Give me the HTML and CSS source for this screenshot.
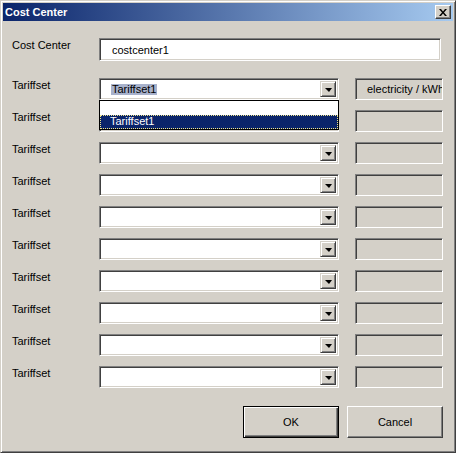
FILE: index.html
```html
<!DOCTYPE html>
<html lang="en">
<head>
    <meta charset="UTF-8">
    <title>Cost Center</title>
    <link rel="stylesheet" href="styles.css">
</head>
<body>

<div class="window">
    <div class="titlebar">
        <span class="title">Cost Center</span>
        <button class="close">
            <svg width="8" height="7" viewBox="0 0 8 7">
                <path d="M0 0h2l2 2.5L6 0h2L5 3.5 8 7H6L4 4.5 2 7H0l3-3.5z" fill="#000"/>
            </svg>
        </button>
    </div>

    <div class="content">
        <div class="form">
            <div class="label">Cost Center</div>
            <div class="field wide"><span class="text">costcenter1</span></div>

            <div class="label">Tariffset</div>
            <div class="combo">
                <div class="combo-text"><span class="selected">Tariffset1</span></div>
                <span class="arrow"></span>
                <div class="list">
                    <div class="item"></div>
                    <div class="item active">Tariffset1</div>
                </div>
            </div>
            <div class="field readonly"><span class="text">electricity / kWh</span></div>

            <div class="label">Tariffset</div>
            <div class="combo"><div class="combo-text"></div><span class="arrow"></span></div>
            <div class="field readonly"></div>

            <div class="label">Tariffset</div>
            <div class="combo"><div class="combo-text"></div><span class="arrow"></span></div>
            <div class="field readonly"></div>

            <div class="label">Tariffset</div>
            <div class="combo"><div class="combo-text"></div><span class="arrow"></span></div>
            <div class="field readonly"></div>

            <div class="label">Tariffset</div>
            <div class="combo"><div class="combo-text"></div><span class="arrow"></span></div>
            <div class="field readonly"></div>

            <div class="label">Tariffset</div>
            <div class="combo"><div class="combo-text"></div><span class="arrow"></span></div>
            <div class="field readonly"></div>

            <div class="label">Tariffset</div>
            <div class="combo"><div class="combo-text"></div><span class="arrow"></span></div>
            <div class="field readonly"></div>

            <div class="label">Tariffset</div>
            <div class="combo"><div class="combo-text"></div><span class="arrow"></span></div>
            <div class="field readonly"></div>

            <div class="label">Tariffset</div>
            <div class="combo"><div class="combo-text"></div><span class="arrow"></span></div>
            <div class="field readonly"></div>

            <div class="label">Tariffset</div>
            <div class="combo"><div class="combo-text"></div><span class="arrow"></span></div>
            <div class="field readonly"></div>
        </div>

        <div class="buttons">
            <button class="btn default">OK</button>
            <button class="btn">Cancel</button>
        </div>
    </div>
</div>

</body>
</html>
```

FILE: styles.css
```css
body {
    margin: 0;
    padding: 0;
    font-family: 'Liberation Sans', Arial, sans-serif;
    font-size: 11px;
    color: #000;
}

.window {
    width: 456px;
    height: 453px;
    box-sizing: border-box;
    background-color: #d4d0c8;
    border: 1px solid;
    border-color: #d4d0c8 #404040 #404040 #d4d0c8;
    box-shadow: inset 1px 1px #ffffff, inset -1px -1px #808080;
    padding: 2px;
    display: flex;
    flex-direction: column;
}

.titlebar {
    height: 18px;
    display: flex;
    align-items: center;
    justify-content: space-between;
    background: linear-gradient(to right, #0a246a, #a6caf0);
}

.title {
    color: #fff;
    font-weight: bold;
    padding-left: 2px;
}

.close {
    width: 16px;
    height: 14px;
    margin-right: 2px;
    padding: 0;
    border: 1px solid;
    border-color: #fff #404040 #404040 #fff;
    box-shadow: inset -1px -1px #808080;
    background-color: #d4d0c8;
    display: flex;
    align-items: center;
    justify-content: center;
}

.content {
    padding: 17px 10px 0 9px;
}

.form {
    display: grid;
    grid-template-columns: 87px 240px 104px;
    row-gap: 10px;
}

.label {
    padding-top: 1px;
    line-height: 13px;
}

.field {
    height: 22px;
    box-sizing: border-box;
    border: 1px solid;
    border-color: #808080 #fff #fff #808080;
    box-shadow: inset 1px 1px #404040, inset -1px -1px #d4d0c8;
    background-color: #fff;
    display: flex;
    align-items: center;
    overflow: hidden;
}

.field .text {
    white-space: nowrap;
    padding-left: 12px;
}

.field.wide {
    grid-column: 2 / 4;
    height: 23px;
    margin-bottom: 7px;
    margin-right: 2px;
}

.field.readonly {
    background-color: #d4d0c8;
    margin-left: 16px;
}

.field.readonly .text {
    padding-left: 11px;
}

.combo {
    position: relative;
    height: 22px;
    box-sizing: border-box;
    border: 1px solid;
    border-color: #808080 #fff #fff #808080;
    box-shadow: inset 1px 1px #404040, inset -1px -1px #d4d0c8;
    background-color: #fff;
    padding: 2px;
    display: flex;
}

.combo-text {
    flex: 1;
    display: flex;
    align-items: center;
    padding-left: 9px;
}

.selected {
    background-color: #a8b2cc;
    line-height: 11px;
    padding: 0 1px;
}

.arrow {
    width: 16px;
    box-sizing: border-box;
    border: 1px solid;
    border-color: #d4d0c8 #404040 #404040 #d4d0c8;
    box-shadow: inset 1px 1px #fff, inset -1px -1px #808080;
    background-color: #d4d0c8;
    display: flex;
    align-items: center;
    justify-content: center;
}

.arrow::after {
    content: '';
    border-left: 4px solid transparent;
    border-right: 3px solid transparent;
    border-top: 4px solid #000;
    margin-top: 1px;
}

.list {
    position: absolute;
    top: 100%;
    left: -1px;
    width: 240px;
    box-sizing: border-box;
    margin-top: 1px;
    border: 1px solid #000;
    background-color: #fff;
    z-index: 2;
}

.item {
    height: 14px;
    line-height: 13px;
    padding-left: 10px;
    box-sizing: border-box;
}

.item.active {
    background-color: #0a246a;
    color: #fff;
    outline: 1px dotted #f0e68c;
    outline-offset: -1px;
}

.buttons {
    display: flex;
    justify-content: flex-end;
    gap: 8px;
    margin-top: 18px;
}

.btn {
    width: 96px;
    height: 32px;
    padding: 0;
    font-family: 'Liberation Sans', Arial, sans-serif;
    font-size: 11px;
    color: #000;
    background-color: #d4d0c8;
    border: 1px solid;
    border-color: #fff #404040 #404040 #fff;
    box-shadow: inset -1px -1px #808080;
}

.btn.default {
    border: 1px solid #000;
    box-shadow: inset 1px 1px #fff, inset -1px -1px #404040, inset -2px -2px #808080;
}
```
